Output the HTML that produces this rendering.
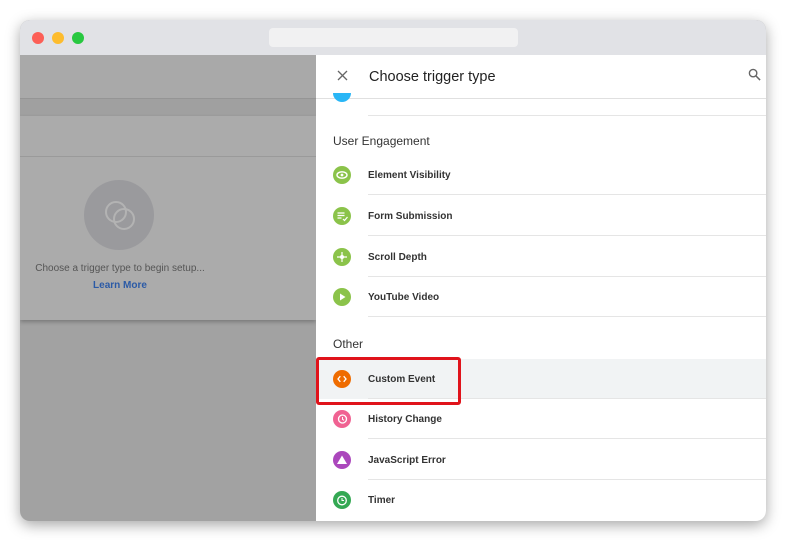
<!DOCTYPE html><html><head><style>
body{margin:0;width:786px;height:540px;background:#fff;font-family:"Liberation Sans",Arial,sans-serif;position:relative;overflow:hidden}
.win{position:absolute;left:20px;top:20px;width:746px;height:501px;border-radius:10px;overflow:hidden;box-shadow:0 4px 14px rgba(0,0,0,.35);background:#a2a2a2}
.tb{position:absolute;left:0;top:0;width:746px;height:35px;background:#e1e2e6}
.dot{position:absolute;top:12px;width:12px;height:12px;border-radius:50%}
.url{position:absolute;left:249px;top:8px;width:249px;height:19px;background:#f1f1f2;border-radius:4px}
.abs{position:absolute}
.panel{position:absolute;left:296px;top:35px;width:450px;height:466px;background:#fff}
.row{position:absolute;left:0;width:450px;height:40px}
.row svg{position:absolute;left:17px;top:11px}
.row .t{position:absolute;left:52px;top:15px;font-size:10px;font-weight:bold;color:#333}
.row .ln{position:absolute;left:52px;right:0;bottom:0;height:1px;background:#e5e5e5}
.hd{position:absolute;left:17px;font-size:12px;color:#333}
</style></head><body>
<div class="win">
<div class="tb"><div class="dot" style="left:12px;background:#fc5f57"></div><div class="dot" style="left:32px;background:#fdbc2e"></div><div class="dot" style="left:52px;background:#28c840"></div><div class="url"></div></div>
<div class="abs" style="left:0;top:35px;width:296px;height:43px;background:#a9a9a9"></div>
<div class="abs" style="left:0;top:78px;width:296px;height:1px;background:#959595"></div>
<div class="abs" style="left:0;top:79px;width:296px;height:17px;background:#a0a0a0"></div>
<div class="abs" style="left:0;top:96px;width:296px;height:204px;background:#ababab;box-shadow:0 2px 4px rgba(0,0,0,.25)"></div>
<div class="abs" style="left:0;top:136px;width:296px;height:1px;background:#9a9a9a"></div>
<div class="abs" style="left:64px;top:160px;width:70px;height:70px;border-radius:50%;background:#9a9a9d"></div>
<div class="abs" style="left:85px;top:181px;width:18px;height:18px;border-radius:50%;border:2px solid #b3b3b3"></div>
<div class="abs" style="left:93px;top:188px;width:18px;height:18px;border-radius:50%;border:2px solid #b3b3b3"></div>
<div class="abs" style="left:10px;top:243px;width:180px;text-align:center;font-size:10px;color:#555">Choose a trigger type to begin setup...</div>
<div class="abs" style="left:10px;top:260px;width:180px;text-align:center;font-size:10px;color:#2b5aa6;font-weight:bold">Learn More</div>
<div class="panel">
<svg class="abs" style="left:21px;top:15px" width="11" height="11" viewBox="0 0 11 11"><path d="M1 1L10 10M10 1L1 10" stroke="#666" stroke-width="1.3"/></svg>
<div class="abs" style="left:53px;top:14px;font-size:14.5px;color:#222">Choose trigger type</div>
<svg class="abs" style="left:432px;top:13px" width="13" height="13" viewBox="0 0 14 14"><circle cx="5.5" cy="5.5" r="4" fill="none" stroke="#666" stroke-width="1.5"/><path d="M8.5 8.5L13 13" stroke="#666" stroke-width="1.6"/></svg>
<div class="abs" style="left:0;top:43px;width:450px;height:1px;background:#e0e0e0"></div>
<div class="abs" style="left:17px;top:38px;width:18px;height:9px;border-radius:0 0 9px 9px;background:#29b6f6"></div>
<div class="abs" style="left:52px;top:60px;right:0;height:1px;background:#e5e5e5"></div>
<div class="hd" style="top:79px">User Engagement</div>
<div class="row" style="top:100px"><svg width="18" height="18"><circle cx="9" cy="9" r="9" fill="#8bc34a"/><ellipse cx="9" cy="9" rx="5" ry="3.2" fill="none" stroke="#fff" stroke-width="1.4"/><circle cx="9" cy="9" r="1.4" fill="#fff"/></svg><div class="t">Element Visibility</div><div class="ln"></div></div>
<div class="row" style="top:141px"><svg width="18" height="18"><circle cx="9" cy="9" r="9" fill="#8bc34a"/><path d="M4.5 6h7M4.5 8.5h7M4.5 11h4" stroke="#fff" stroke-width="1.2" fill="none"/><path d="M10 12l1.5 1.5 3-3.5" stroke="#fff" stroke-width="1.2" fill="none"/></svg><div class="t">Form Submission</div><div class="ln"></div></div>
<div class="row" style="top:182px"><svg width="18" height="18"><circle cx="9" cy="9" r="9" fill="#8bc34a"/><path d="M9 4v10M4 9h10" stroke="#fff" stroke-width="1.2"/><circle cx="9" cy="9" r="2" fill="#fff"/></svg><div class="t">Scroll Depth</div><div class="ln"></div></div>
<div class="row" style="top:222px"><svg width="18" height="18"><circle cx="9" cy="9" r="9" fill="#8bc34a"/><path d="M7 5.5v7l5.5-3.5z" fill="#fff"/></svg><div class="t">YouTube Video</div><div class="ln"></div></div>
<div class="hd" style="top:282px">Other</div>
<div class="row" style="top:304px;background:#f1f3f4"><svg width="18" height="18"><circle cx="9" cy="9" r="9" fill="#ef6c00"/><path d="M7.3 6.2L5 9l2.3 2.8M10.7 6.2L13 9l-2.3 2.8" fill="none" stroke="#fff" stroke-width="1.3"/></svg><div class="t">Custom Event</div><div class="ln"></div></div>
<div class="row" style="top:344px"><svg width="18" height="18"><circle cx="9" cy="9" r="9" fill="#f06292"/><circle cx="9.5" cy="9" r="4" fill="none" stroke="#fff" stroke-width="1.3"/><path d="M9.5 7v2.3l1.5 1" stroke="#fff" fill="none"/></svg><div class="t">History Change</div><div class="ln"></div></div>
<div class="row" style="top:385px"><svg width="18" height="18"><circle cx="9" cy="9" r="9" fill="#ab47bc"/><path d="M9 4.5l5 8.5H4z" fill="#fff"/></svg><div class="t">JavaScript Error</div><div class="ln"></div></div>
<div class="row" style="top:425px"><svg width="18" height="18"><circle cx="9" cy="9" r="9" fill="#34a853"/><circle cx="9" cy="9.5" r="4.3" fill="none" stroke="#fff" stroke-width="1.3"/><path d="M9 7v2.5h2" stroke="#fff" fill="none"/></svg><div class="t">Timer</div></div>
</div>
</div>
<div class="abs" style="left:316px;top:357px;width:139px;height:42px;border:3px solid #e0131b;border-radius:3px"></div>
</body></html>
